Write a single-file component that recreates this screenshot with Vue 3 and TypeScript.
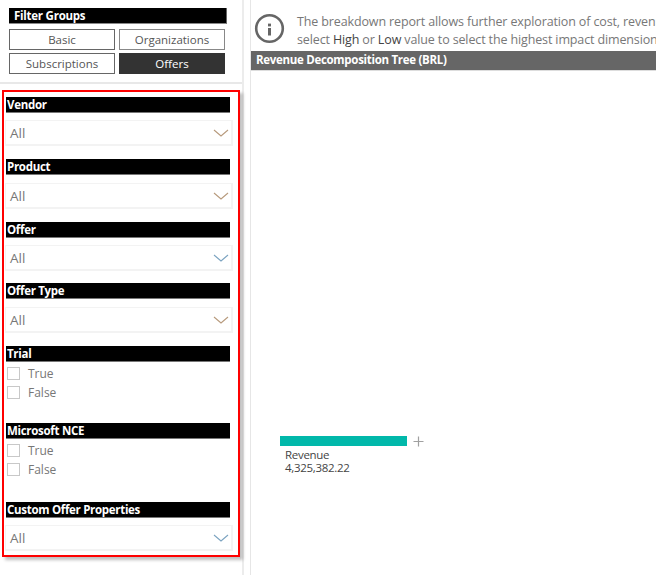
<script setup lang="ts">
interface Filter {
  label: string
  kind: 'drop' | 'check'
  chevron?: string
  cls: string
}
const groups: { label: string; active?: boolean }[] = [
  { label: 'Basic' },
  { label: 'Organizations' },
  { label: 'Subscriptions' },
  { label: 'Offers', active: true },
]
const filters: Filter[] = [
  { label: 'Vendor', kind: 'drop', chevron: '#b79a7c', cls: 's-vendor' },
  { label: 'Product', kind: 'drop', chevron: '#b79a7c', cls: 's-product' },
  { label: 'Offer', kind: 'drop', chevron: '#7ba3c0', cls: 's-offer' },
  { label: 'Offer Type', kind: 'drop', chevron: '#b79a7c', cls: 's-type' },
  { label: 'Trial', kind: 'check', cls: 's-trial' },
  { label: 'Microsoft NCE', kind: 'check', cls: 's-nce' },
  { label: 'Custom Offer Properties', kind: 'drop', chevron: '#7ba3c0', cls: 's-custom' },
]
</script>

<template>
  <div class="page">
    <aside class="side">
      <div class="groups">
        <div class="groups-title">Filter Groups</div>
        <div class="group-grid">
          <button
            v-for="g in groups"
            :key="g.label"
            class="group-btn"
            :class="{ active: g.active }"
          >{{ g.label }}</button>
        </div>
      </div>
      <div class="filters">
        <section v-for="f in filters" :key="f.label" class="filter" :class="f.cls">
          <div class="filter-title">{{ f.label }}</div>
          <div v-if="f.kind === 'drop'" class="drop">
            <span>All</span>
            <svg width="16" height="8" viewBox="0 0 16 8" fill="none">
              <path d="M1 1l7 6 7-6" :stroke="f.chevron" stroke-width="1.1" />
            </svg>
          </div>
          <div v-else class="checks">
            <label class="check"><i class="box"></i>True</label>
            <label class="check"><i class="box"></i>False</label>
          </div>
        </section>
      </div>
    </aside>
    <main class="main">
      <div class="intro">
        <svg class="info" width="33" height="33" viewBox="0 0 33 33" fill="none">
          <circle cx="16.5" cy="16.5" r="13.3" stroke="#666" stroke-width="2.6" />
          <rect x="15" y="16" width="3" height="7.5" fill="#666" />
          <rect x="15" y="11.6" width="3" height="2.8" fill="#666" />
        </svg>
        <p class="intro-text">
          The breakdown report allows further exploration of cost, revenue and margin;<br />
          select <b>High</b> or <b>Low</b> value to select the highest impact dimension and value
        </p>
      </div>
      <div class="tree-bar">Revenue Decomposition Tree (BRL)</div>
      <div class="tree">
        <div class="node-row">
          <div class="node-bar"></div>
          <svg class="plus" width="11" height="11" viewBox="0 0 11 11">
            <path d="M0.5 5.5h10M5.5 0.5v10" stroke="#a0a0a0" stroke-width="1.2" fill="none" />
          </svg>
        </div>
        <div class="node-text">Revenue<br />4,325,382.22</div>
      </div>
    </main>
  </div>
</template>

<style>
html, body { margin: 0; background: #fff; overflow: hidden; }
</style>

<style scoped>
.page {
  width: 656px;
  height: 575px;
  display: flex;
  overflow: hidden;
  background: #fff;
  font-family: "Open Sans", "Noto Sans", sans-serif;
  color: #666;
}
.side {
  width: 242px;
  flex: none;
  border-right: 2px solid #ececec;
}
.groups {
  height: 84px;
  box-sizing: border-box;
  padding: 8px 0 0 9px;
  border-bottom: 2px solid #e8e8e8;
}
.groups-title {
  width: 218px;
  height: 16px;
  box-sizing: border-box;
  background: #000;
  border-right: 1px solid #666;
  border-bottom: 1px solid #888;
  color: #fff;
  font-size: 11.5px;
  font-weight: 700;
  letter-spacing: -0.25px;
  line-height: 15px;
  padding-left: 5px;
}
.group-grid {
  display: grid;
  grid-template-columns: 106px 106px;
  column-gap: 4px;
  row-gap: 3px;
  margin-top: 5px;
}
.group-btn {
  height: 21px;
  box-sizing: border-box;
  border: 1px solid #666;
  background: #fff;
  color: #555;
  font: 11.5px "Open Sans", sans-serif;
  padding: 0;
  line-height: 18px;
}
.group-btn:nth-child(2) { border-color: #888; }
.group-btn.active {
  background: #333;
  border-color: #333;
  color: #fff;
}
.filters {
  margin: 6px 0 0 2px;
  width: 238px;
  height: 467px;
  box-sizing: border-box;
  border: 2px solid #f00;
  padding: 5px 0 0 2px;
  box-shadow: 3px 3px 3px rgba(0, 0, 0, 0.25);
}
.filter-title {
  width: 224px;
  height: 16px;
  box-sizing: border-box;
  background: #000;
  color: #fff;
  font-size: 11.5px;
  font-weight: 700;
  letter-spacing: -0.3px;
  line-height: 15px;
  padding-left: 1px;
  border-bottom: 1px solid #777;
}
.drop {
  width: 228px;
  height: 26px;
  box-sizing: border-box;
  margin: 7px 0 0 -1px;
  border: 1px solid #f3f3f3;
  border-width: 1px 2px 2px 1px;
  padding: 0 2px 0 4px;
  display: flex;
  align-items: center;
  justify-content: space-between;
  font-size: 13.5px;
  color: #777;
}
.s-product { margin-top: 13px; }
.s-product .drop { margin-top: 8px; }
.s-offer { margin-top: 13px; }
.s-type { margin-top: 12px; }
.s-type .drop { margin-top: 8px; }
.s-trial { margin-top: 13px; }
.s-nce { margin-top: 24px; }
.s-custom { margin-top: 26px; }
.checks {
  margin-top: 5px;
  display: flex;
  flex-direction: column;
  gap: 6px;
}
.check {
  display: flex;
  align-items: center;
  height: 13px;
  font-size: 12px;
  color: #777;
}
.box {
  width: 13px;
  height: 13px;
  box-sizing: border-box;
  border: 1px solid #c8c8c8;
  margin: 0 8px 0 1px;
  flex: none;
}
.main {
  flex: 1;
  min-width: 0;
  margin-left: 6px;
  border-left: 1px solid #e6e6e6;
  overflow: hidden;
}
.intro {
  height: 51px;
  box-sizing: border-box;
  padding: 12px 0 0 3px;
  display: flex;
  gap: 11px;
  margin-left: -1px;
}
.info { flex: none; }
.intro-text {
  margin: 1px 0 0;
  font-size: 12.5px;
  letter-spacing: -0.13px;
  line-height: 18px;
  white-space: nowrap;
  color: #777;
}
.intro-text b { font-weight: 400; color: #444; }
.tree-bar {
  height: 20px;
  background: #666;
  color: #fff;
  font-size: 11.5px;
  font-weight: 700;
  letter-spacing: -0.3px;
  line-height: 18px;
  padding-left: 6px;
  border-bottom: 1px solid #ddd;
  box-sizing: border-box;
  margin-left: -1px;
}
.tree { padding: 365px 0 0 29px; }
.node-row {
  display: flex;
  align-items: center;
  height: 10px;
}
.node-bar {
  width: 127px;
  height: 10px;
  background: #01b8aa;
}
.plus {
  margin-left: 6px;
  flex: none;
}
.node-text {
  margin: 2px 0 0 5px;
  font-size: 11.5px;
  letter-spacing: -0.3px;
  line-height: 13px;
  color: #444;
}
</style>
